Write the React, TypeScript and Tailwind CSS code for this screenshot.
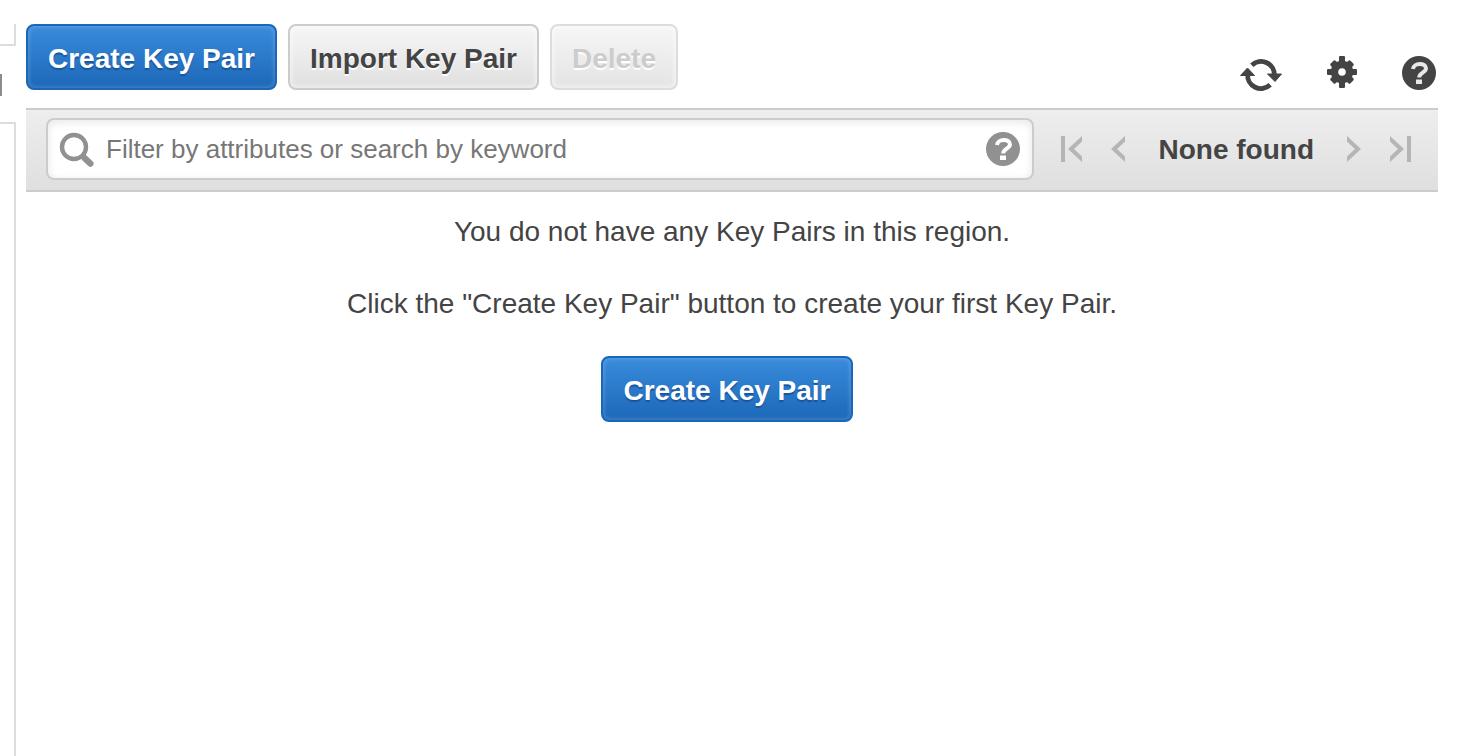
import type { ButtonHTMLAttributes, ReactNode } from 'react';

const buttonBase =
  'h-[66px] rounded-lg border-2 px-5 pt-1 text-[28px] leading-8 font-bold whitespace-nowrap';

const buttonVariants = {
  primary:
    'border-[#1a67b9] bg-linear-to-b from-[#398bdc] to-[#1c68b8] text-white [text-shadow:0_2px_1px_#1a559b] shadow-[inset_0_0_4px_1px_rgba(255,255,255,0.2)]',
  secondary:
    'border-[#cccccc] bg-linear-to-b from-[#f6f6f6] to-[#e0e0e0] text-[#444444] [text-shadow:0_2px_0_#ffffff] shadow-[inset_0_0_4px_2px_rgba(255,255,255,0.5)]',
  disabled:
    'border-[#dddddd] bg-linear-to-b from-[#f6f6f6] to-[#e4e4e4] text-[#cccccc] [text-shadow:0_2px_0_#ffffff] shadow-[inset_0_0_4px_2px_rgba(255,255,255,0.5)]',
};

type ButtonProps = ButtonHTMLAttributes<HTMLButtonElement> & {
  variant: keyof typeof buttonVariants;
};

function Button({ variant, ...props }: ButtonProps) {
  return <button type="button" className={`${buttonBase} ${buttonVariants[variant]}`} {...props} />;
}

function IconButton({ label, children, disabled }: { label: string; children: ReactNode; disabled?: boolean }) {
  return (
    <button type="button" aria-label={label} disabled={disabled} className="shrink-0">
      {children}
    </button>
  );
}

function RefreshIcon() {
  return (
    <svg width="42" height="36" viewBox="0 0 42 36" className="block">
      <g fill="none" stroke="#444444" strokeWidth="4.8">
        <path d="M11.8 9.2A13.300 13.300 0 0 1 34.300 20" />
        <path d="M30.200 28.800A13.300 13.300 0 0 1 7.700 18" />
      </g>
      <path
        fill="#444444"
        stroke="#444444"
        strokeLinejoin="round"
        d="M27.500 18H41.500L35 25.500ZM0.500 19.500H14.500L7.500 12Z"
      />
    </svg>
  );
}

function GearIcon() {
  return (
    <svg width="30" height="32" viewBox="0 0 30 32" className="block">
      <g fill="#444444">
        <rect x="12" y="0" width="6" height="32" rx="1" />
        <rect x="0" y="13" width="30" height="6" rx="1" />
        <rect x="11.500" y="2" width="7" height="28" rx="1.500" transform="rotate(45 15 16)" />
        <rect x="11.500" y="2" width="7" height="28" rx="1.500" transform="rotate(-45 15 16)" />
      </g>
      <circle cx="15" cy="16" r="7.500" fill="none" stroke="#444444" strokeWidth="7.400" />
      <circle cx="15" cy="16" r="3.800" fill="#ffffff" />
    </svg>
  );
}

function HelpIcon({ color, mark }: { color: string; mark: string }) {
  return (
    <svg width="34" height="34" viewBox="0 0 34 34" className="block">
      <circle cx="17" cy="17" r="17" fill={color} />
      <path
        d="M11 13C11.500 6.500 24 6.500 24 12.300C24 16.800 17.200 16.500 17.200 21.500"
        fill="none"
        stroke={mark}
        strokeWidth="4"
      />
      <rect x="14" y="23.500" width="6" height="4.500" fill={mark} />
    </svg>
  );
}

function SearchIcon() {
  return (
    <svg width="36" height="36" viewBox="0 0 36 36" className="block shrink-0" fill="none" stroke="#919191">
      <circle cx="15" cy="16" r="12" strokeWidth="4.400" />
      <path d="M22.500 23.500L27 28" strokeWidth="5" />
      <path d="M26 27.500L31.300 32.500" strokeWidth="6.500" strokeLinecap="round" />
    </svg>
  );
}

function Chevron({ flip }: { flip?: boolean }) {
  return (
    <svg width="16" height="26" viewBox="0 0 16 26" className="block" fill="#b5b5b5">
      <path d={flip ? 'M1 0L15 13L1 26V20.500L9 13L1 5.500Z' : 'M15 0L1 13L15 26V20.500L7 13L15 5.500Z'} />
    </svg>
  );
}

function EndChevron({ flip }: { flip?: boolean }) {
  return (
    <svg width="22" height="26" viewBox="0 0 22 26" className="block" fill="#b5b5b5">
      <rect x={flip ? 17 : 1} y="0" width="4" height="26" />
      <path d={flip ? 'M0 0L14 13L0 26V20.500L8 13L0 5.500Z' : 'M22 0L8 13L22 26V20.500L14 13L22 5.500Z'} />
    </svg>
  );
}

export default function App() {
  return (
    <div className="flex min-h-screen bg-white font-['Liberation_Sans',Arial,sans-serif] text-[#444444]">
      <aside className="flex w-4 shrink-0 flex-col pt-6">
        <div className="h-[22px] border-r-2 border-b-2 border-[#dddddd]" />
        <div className="flex h-[76px] items-center pt-0.5">
          <div className="h-[22px] w-0.5 bg-[#8c8c8c]" />
        </div>
        <div className="grow border-t-2 border-r-2 border-[#dddddd]" />
      </aside>

      <main className="min-w-0 grow pt-6 pr-6 pl-[10px]">
        <header className="flex items-start justify-between pb-4">
          <div className="flex gap-[11px]">
            <Button variant="primary">Create Key Pair</Button>
            <Button variant="secondary">Import Key Pair</Button>
            <Button variant="disabled" disabled>
              Delete
            </Button>
          </div>
          <div className="flex items-start gap-[45px] pt-8 pr-0.5">
            <IconButton label="Refresh">
              <RefreshIcon />
            </IconButton>
            <IconButton label="Settings">
              <GearIcon />
            </IconButton>
            <IconButton label="Help">
              <HelpIcon color="#444444" mark="#e8e8e8" />
            </IconButton>
          </div>
        </header>

        <div className="flex items-center border-y-2 border-[#cccccc] bg-linear-to-b from-[#eeeeee] to-[#dfdfdf] pt-2 pr-[26px] pb-[10px] pl-5">
          <div className="flex h-[62px] min-w-0 grow items-center rounded-lg border-2 border-[#cccccc] bg-white pr-3 pl-[11px] shadow-[inset_0_2px_8px_rgba(0,0,0,0.1)]">
            <SearchIcon />
            <input
              type="text"
              aria-label="Filter key pairs"
              placeholder="Filter by attributes or search by keyword"
              className="min-w-0 grow bg-transparent pl-[11px] text-[26px] leading-8 outline-none placeholder:text-[#777777]"
            />
            <IconButton label="Filter help">
              <HelpIcon color="#919191" mark="#ffffff" />
            </IconButton>
          </div>
          <nav aria-label="Pagination" className="flex shrink-0 items-center pl-[26px]">
            <IconButton label="First page" disabled>
              <EndChevron />
            </IconButton>
            <div className="flex px-7">
              <IconButton label="Previous page" disabled>
                <Chevron />
              </IconButton>
            </div>
            <span className="px-1 pt-0.5 text-[28px] leading-8 font-bold whitespace-nowrap">None found</span>
            <div className="flex px-7">
              <IconButton label="Next page" disabled>
                <Chevron flip />
              </IconButton>
            </div>
            <IconButton label="Last page" disabled>
              <EndChevron flip />
            </IconButton>
          </nav>
        </div>

        <section className="flex flex-col items-center pt-[22px] text-center text-[28px] leading-9">
          <p>You do not have any Key Pairs in this region.</p>
          <p className="pt-9">Click the "Create Key Pair" button to create your first Key Pair.</p>
          <div className="pt-[34px] pr-[10px]">
            <Button variant="primary">Create Key Pair</Button>
          </div>
        </section>
      </main>
    </div>
  );
}
